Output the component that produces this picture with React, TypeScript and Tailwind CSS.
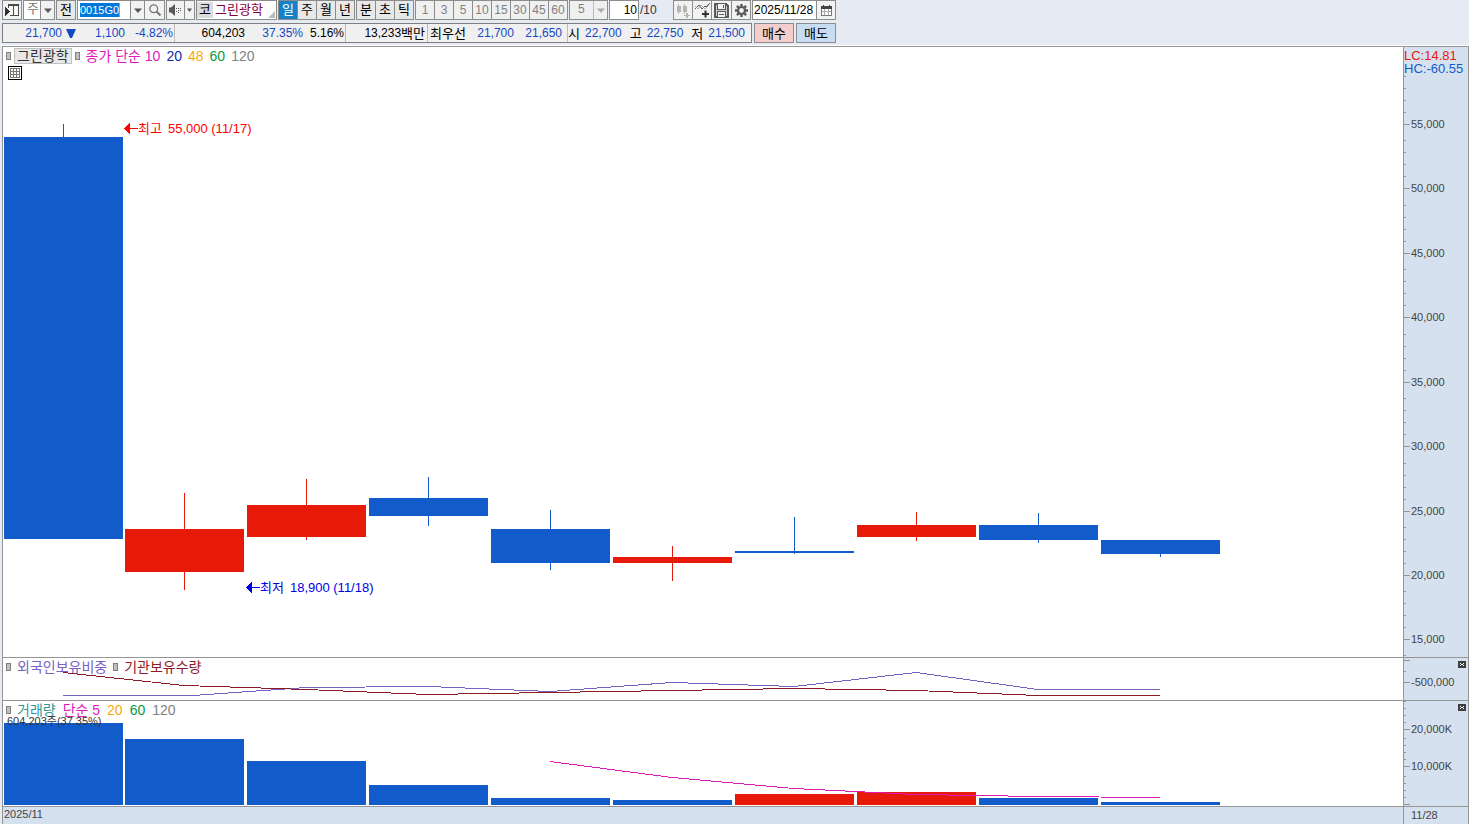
import React from "react";

const BLUE = "#125bcb";
const RED = "#e71908";

type Candle = { x: number; open: number; close: number; high: number; low: number; color: string };

const PLOT_W = 1400;
const PRICE_H = 610;
const RATIO_H = 42;
const VOLUME_H = 105;

const candles: Candle[] = [
  { x: 1, open: 90, close: 492, high: 77, low: 492, color: BLUE },
  { x: 122, open: 482, close: 525, high: 446, low: 543, color: RED },
  { x: 244, open: 458, close: 490, high: 432, low: 493, color: RED },
  { x: 366, open: 451, close: 469, high: 430, low: 479, color: BLUE },
  { x: 488, open: 482, close: 516, high: 463, low: 523, color: BLUE },
  { x: 610, open: 510, close: 516, high: 499, low: 534, color: RED },
  { x: 732, open: 504, close: 506, high: 470, low: 507, color: BLUE },
  { x: 854, open: 478, close: 490, high: 465, low: 494, color: RED },
  { x: 976, open: 478, close: 493, high: 466, low: 496, color: BLUE },
  { x: 1098, open: 493, close: 507, high: 493, low: 510, color: BLUE },
];

const volumes = [
  { x: 1, y: 22, color: BLUE },
  { x: 122, y: 38, color: BLUE },
  { x: 244, y: 60, color: BLUE },
  { x: 366, y: 84, color: BLUE },
  { x: 488, y: 97, color: BLUE },
  { x: 610, y: 99, color: BLUE },
  { x: 732, y: 93, color: RED },
  { x: 854, y: 91, color: RED },
  { x: 976, y: 97, color: BLUE },
  { x: 1098, y: 101, color: BLUE },
];

type Tick = { y: number; label?: string; major?: boolean };

const priceMajors = [
  { y: 77, label: "55,000" },
  { y: 141, label: "50,000" },
  { y: 206, label: "45,000" },
  { y: 270, label: "40,000" },
  { y: 335, label: "35,000" },
  { y: 399, label: "30,000" },
  { y: 464, label: "25,000" },
  { y: 528, label: "20,000" },
  { y: 592, label: "15,000" },
];

const priceTicks: Tick[] = [
  { y: 0 },
  ...priceMajors.flatMap((m) => [
    ...[48, 36, 24, 12].map((d) => ({ y: m.y - d })),
    { y: m.y, label: m.label, major: true },
  ]),
  { y: 608 },
];

const ratioTicks: Tick[] = [
  { y: 2, major: true },
  { y: 13 },
  { y: 24, major: true, label: "-500,000" },
];

const volumeTicks: Tick[] = [
  { y: 0 },
  { y: 7 },
  { y: 14 },
  { y: 21 },
  { y: 28, major: true, label: "20,000K" },
  { y: 37 },
  { y: 44 },
  { y: 51 },
  { y: 58 },
  { y: 65, major: true, label: "10,000K" },
  { y: 75 },
  { y: 82 },
  { y: 89 },
  { y: 96 },
  { y: 103, major: true },
];

function Axis({ ticks, height, children }: { ticks: Tick[]; height: number; children?: React.ReactNode }) {
  return (
    <div className="relative w-[66px] shrink-0 overflow-hidden border-x border-[#959595] bg-[#d6e1ef] text-[11px] leading-none text-[#444]">
      {ticks.map((t) => (
        <div key={t.y} className="absolute left-0 flex h-px items-center" style={{ top: `${(t.y / height) * 100}%` }}>
          <span className={t.major ? "h-px w-1.5 bg-[#999592]" : "h-px w-0.5 bg-[#999592]"} />
          {t.label && <span className="ml-px whitespace-nowrap">{t.label}</span>}
        </div>
      ))}
      {children}
    </div>
  );
}

function CloseBox({ label }: { label: string }) {
  return (
    <button aria-label={label} className="absolute top-[3px] right-0.5 flex h-[7px] w-2 items-center justify-center bg-[#3f3f3f]">
      <svg width="4" height="3" viewBox="0 0 4 3" shapeRendering="crispEdges" fill="#fff">
        <path d="M0 0h1v1H0zM3 0h1v1H3zM1 1h2v1H1zM0 2h1v1H0zM3 2h1v1H3z" />
      </svg>
    </button>
  );
}

function Marker() {
  return <span className="h-[8px] w-[5px] shrink-0 border border-[#808080] bg-[#c0c0c0]" />;
}

function Plot({ height, children }: { height: number; children: React.ReactNode }) {
  return (
    <svg
      className="absolute inset-0 h-full w-full"
      viewBox={`0 0 ${PLOT_W} ${height}`}
      preserveAspectRatio="none"
      shapeRendering="crispEdges"
      aria-hidden="true"
    >
      {children}
    </svg>
  );
}

function Note({ x, y, color, label, value }: { x: number; y: number; color: string; label: string; value: string }) {
  return (
    <div
      className="absolute flex h-4 -translate-y-1/2 items-center text-[13px] leading-none whitespace-nowrap"
      style={{ left: `${(x / PLOT_W) * 100}%`, top: `${(y / PRICE_H) * 100}%`, color }}
    >
      <svg width="14" height="11" viewBox="0 0 14 11" fill="currentColor" shapeRendering="crispEdges">
        <path d="M0 5.5 6 0v11zM6 5h8v1H6z" />
      </svg>
      <span className="mr-1.5">{label}</span>
      <span>{value}</span>
    </div>
  );
}

function Segments({ items, active, muted }: { items: string[]; active?: string; muted?: boolean }) {
  return (
    <div className="flex h-5 gap-px border border-[#8c8c8c] bg-[#8c8c8c]">
      {items.map((it) => (
        <button
          key={it}
          className={
            it === active
              ? "flex w-[18px] items-center justify-center bg-[#1682c5] text-[13px] text-white"
              : muted
                ? "flex w-[18px] items-center justify-center bg-[#f0f0f0] text-[12px] text-[#808080]"
                : "flex w-[18px] items-center justify-center bg-[#e8e8e8] text-[13px] text-black"
          }
        >
          {it}
        </button>
      ))}
    </div>
  );
}

function Caret({ color }: { color: string }) {
  return (
    <svg width="8" height="5" viewBox="0 0 8 5" fill={color}>
      <path d="M0 .5h8L4 5z" />
    </svg>
  );
}

function IconButton({ label, className, children }: { label: string; className: string; children: React.ReactNode }) {
  return (
    <button aria-label={label} className={`flex h-5 items-center justify-center border border-[#8c8c8c] bg-[#f2f2f2] ${className}`}>
      {children}
    </button>
  );
}

function Toolbar() {
  return (
    <div className="flex h-5 items-center pl-0.5">
      <IconButton label="창 목록" className="w-5">
        <svg width="14" height="14" viewBox="0 0 14 14" shapeRendering="crispEdges">
          <path d="M3.500 5V1.500h10v11H5" fill="#f8f8f8" stroke="#4a4a4a" />
          <path d="M3 1h11v2H3zM8 3h1v10H8z" fill="#4a4a4a" />
          <path d="M0 4v9l5-4.500z" fill="#333" />
        </svg>
      </IconButton>
      <div className="relative ml-px flex h-5 w-8 border border-[#8c8c8c] bg-white">
        <select aria-label="주기" className="h-[18px] w-full appearance-none pb-0.5 pl-[3px] text-[13px] leading-4 text-[#777] outline-none">
          <option>주</option>
        </select>
        <span className="pointer-events-none absolute inset-y-0 right-0 flex w-3.5 items-center justify-center border-l border-[#8c8c8c] bg-[#f2f2f2]">
          <Caret color="#555" />
        </span>
      </div>
      <button className="ml-px flex h-5 w-5 items-center justify-center border border-[#8c8c8c] bg-[#e8e8e8] text-[13px]">전</button>
      <div className="ml-px flex h-5 w-[68px] border border-[#8c8c8c] bg-white">
        <div className="flex flex-1 items-center pl-0.5">
          <input
            aria-label="종목코드"
            defaultValue="0015G0"
            className="h-3.5 w-[40px] border-r border-[#ff8c1a] bg-[#0078d7] text-[11px] text-white outline-none"
          />
        </div>
        <button aria-label="종목코드 목록" className="flex w-3.5 items-center justify-center border-l border-[#8c8c8c] bg-[#f2f2f2]">
          <Caret color="#555" />
        </button>
      </div>
      <IconButton label="검색" className="-ml-px w-[21px]">
        <svg width="12" height="12" viewBox="0 0 12 12" fill="none" stroke="#777">
          <circle cx="4.700" cy="4.700" r="3.900" strokeWidth="1.300" />
          <path d="M7.500 7.500l4 4" strokeWidth="2" />
        </svg>
      </IconButton>
      <IconButton label="음성" className="ml-px w-[19px]">
        <svg width="13" height="12" viewBox="0 0 13 12" fill="#5a5a5a">
          <path d="M0 3.500h2L6 0v12L2 8.500H0z" />
          <path d="M7 4h1v1H7zM7 7h1v1H7zM9 4h1v1H9zM9 6h1v1H9zM9 8h1v1H9zM11 4h1v1h-1zM11 6h1v1h-1z" shapeRendering="crispEdges" />
        </svg>
      </IconButton>
      <IconButton label="음성 설정" className="-ml-px w-[11px]">
        <svg width="5" height="4" viewBox="0 0 5 4" fill="#555">
          <path d="M0 .5h5L2.500 4z" />
        </svg>
      </IconButton>
      <div className="relative ml-px flex h-5 w-[81px] items-center border border-[#8c8c8c] bg-white text-[13px]">
        <span className="flex h-4 w-4 items-center justify-center bg-[#dcdcdc] text-black">코</span>
        <span className="ml-0.5 text-[#800040]">그린광학</span>
        <svg className="absolute right-px bottom-px" width="7" height="7" viewBox="0 0 7 7" fill="#bbb">
          <path d="M7 0v7H0z" />
        </svg>
      </div>
      <div className="ml-px flex gap-px">
        <Segments items={["일", "주", "월", "년"]} active="일" />
        <Segments items={["분", "초", "틱"]} />
        <Segments items={["1", "3", "5", "10", "15", "30", "45", "60"]} muted />
      </div>
      <div className="relative ml-px flex h-5 w-[39px] border border-[#8c8c8c] bg-[#f0f0f0]">
        <select aria-label="분 단위" className="h-[18px] w-full appearance-none pb-0.5 pl-2 text-[12px] leading-4 text-[#808080] outline-none">
          <option>5</option>
        </select>
        <span className="pointer-events-none absolute inset-y-0 right-0 flex w-3.5 items-center justify-center border-l border-[#bbb] bg-[#f0f0f0]">
          <Caret color="#aaa" />
        </span>
      </div>
      <label className="ml-px flex items-center text-[12px] text-[#333]">
        <input
          aria-label="조회 개수"
          defaultValue="10"
          className="h-5 w-[30px] border border-[#8c8c8c] bg-white pr-px text-right text-black outline-none"
        />
        <span className="ml-px w-[33px]">/10</span>
      </label>
      <div className="flex">
        <IconButton label="캔들 추가" className="w-5">
          <svg width="15" height="15" viewBox="0 0 15 15" fill="#b4b4b4" shapeRendering="crispEdges">
            <path d="M1 3h4v6H1zM2 1h1v10H2zM7 3h4v6H7zM8 1h1v10H8zM8 12h6v1H8zM10 10h2v5h-2z" />
          </svg>
        </IconButton>
        <IconButton label="지표 추가" className="-ml-px w-5">
          <svg width="15" height="15" viewBox="0 0 15 15" fill="none">
            <path d="M0 6l4-4 3 4 3-3 1 1 4-4" stroke="#555" />
            <path d="M0 3l3 3 3-4 4 4 4-4" stroke="#999" strokeWidth=".8" />
            <path d="M7 11h7M10.500 7.500v7" stroke="#333" strokeWidth="2" />
          </svg>
        </IconButton>
        <IconButton label="저장" className="-ml-px w-[21px]">
          <svg width="15" height="15" viewBox="0 0 15 15" fill="none" stroke="#5a5a5a" shapeRendering="crispEdges">
            <path d="M1 1h11l2 2v11H1z" fill="#ccc" strokeWidth="1.500" />
            <path d="M3.500 1v5h8V1M3.500 14V8.500h8V14" fill="#f2f2f2" />
            <path d="M9.500 2v3M5 11.500h5" />
          </svg>
        </IconButton>
        <IconButton label="설정" className="-ml-px w-5">
          <svg width="13" height="13" viewBox="0 0 13 13" fill="none" stroke="#5a5a5a">
            <circle cx="6.500" cy="6.500" r="3.500" strokeWidth="2.200" />
            <path d="M6.500 0v2.500M6.500 10.500V13M0 6.500h2.500M10.500 6.500H13M1.900 1.900l1.700 1.700M9.400 9.400l1.700 1.700M1.900 11.100l1.700-1.700M9.400 3.600l1.700-1.700" strokeWidth="2.400" />
          </svg>
        </IconButton>
      </div>
      <div className="ml-px flex">
        <input
          aria-label="조회 일자"
          defaultValue="2025/11/28"
          className="h-5 w-[65px] border border-[#8c8c8c] bg-white pl-px text-[12px] outline-none"
        />
        <IconButton label="달력" className="-ml-px w-5">
          <svg width="11" height="11" viewBox="0 0 11 11" shapeRendering="crispEdges">
            <path d="M0 1h11v10H0z" fill="#777" />
            <path d="M1 4h9v6H1z" fill="#fff" />
            <path d="M2 0h1v2H2zM8 0h1v2H8zM0 1h11v3H0z" fill="#444" />
            <path d="M1 6h9v1H1zM3 4h1v6H3zM7 4h1v6H7z" fill="#aaa" />
          </svg>
        </IconButton>
      </div>
    </div>
  );
}

function QuoteBar() {
  return (
    <div className="mt-[3px] flex h-5 pl-0.5">
      <div className="flex h-5 w-[750px] border border-[#808080] bg-[#f0f0f0] text-[12px] leading-none whitespace-nowrap text-[#1449c4]">
        <div className="flex w-[172px] items-center justify-end border-r border-[#bbb] pr-px">
          <span>21,700</span>
          <svg className="ml-1" width="10" height="10" viewBox="0 0 10 10" fill="#1449c4">
            <path d="M0 1h10L6 10H4z" />
          </svg>
          <span className="w-[49px] text-right">1,100</span>
          <span className="w-12 text-right">-4.82%</span>
        </div>
        <div className="flex w-[171px] items-center justify-end border-r border-[#bbb] pr-px">
          <span className="text-black">604,203</span>
          <span className="w-[58px] text-right">37.35%</span>
          <span className="w-[41px] text-right text-black">5.16%</span>
        </div>
        <div className="flex w-[82px] items-center justify-end border-r border-[#bbb] pr-0.5 text-black">
          13,233<span className="text-[13px]">백만</span>
        </div>
        <div className="flex w-[140px] items-center justify-between border-r border-[#bbb] pr-[5px] pl-0.5">
          <span className="text-[13px] text-black">최우선</span>
          <span>21,700</span>
          <span>21,650</span>
        </div>
        <div className="flex flex-1 items-center justify-between pr-1.5">
          {[
            ["시", "22,700"],
            ["고", "22,750"],
            ["저", "21,500"],
          ].map(([k, v]) => (
            <span key={k} className="flex items-center gap-[5px]">
              <span className="text-[13px] text-black">{k}</span>
              <span>{v}</span>
            </span>
          ))}
        </div>
      </div>
      <button className="ml-0.5 h-5 w-10 border border-[#8c8c8c] bg-[#f4ceca] text-[13px] leading-none">매수</button>
      <button className="ml-0.5 h-5 w-10 border border-[#8c8c8c] bg-[#c8dcf2] text-[13px] leading-none">매도</button>
    </div>
  );
}

export default function App() {
  return (
    <div className="flex min-h-screen flex-col bg-[#e6ebf3] font-['Liberation_Sans','Noto_Sans_CJK_KR',sans-serif] text-black">
      <header className="border-b border-white pb-0.5">
        <Toolbar />
        <QuoteBar />
      </header>

      <main className="ml-0.5 flex flex-1 flex-col border-t border-l border-[#959595] bg-white">
        <section className="flex min-h-80 flex-1 border-b border-[#959595]">
          <div className="relative min-w-0 flex-1 overflow-hidden">
            <Plot height={PRICE_H}>
              {candles.map((c) => (
                <g key={c.x} fill={c.color}>
                  <rect x={c.x + 59} y={c.high} width="1" height={c.low - c.high} />
                  <rect x={c.x} y={c.open} width="119" height={c.close - c.open} />
                </g>
              ))}
            </Plot>
            <div className="relative flex items-center pt-px pl-[3px] text-[14px] leading-none">
              <Marker />
              <span className="mr-[3px] ml-[3px] flex h-4 items-center border border-[#c0c0c0] bg-[#e8e8e8] px-0.5 text-[#333]">그린광학</span>
              <Marker />
              <span className="ml-1.5 flex gap-1.5">
                <span className="text-[#e01bb5]">종가 단순 10</span>
                <span className="text-[#1429a8]">20</span>
                <span className="text-[#f5ab0c]">48</span>
                <span className="text-[#0a9a3c]">60</span>
                <span className="text-[#808080]">120</span>
              </span>
            </div>
            <button aria-label="데이터 표" className="relative mt-0.5 ml-[5px] flex h-3.5 w-3.5 items-center justify-center border border-black bg-white">
              <svg width="10" height="10" viewBox="0 0 10 10" fill="none" stroke="#777" shapeRendering="crispEdges">
                <path d="M.5.5h9v9h-9zM0 3.500h10M0 6.500h10M3.500 0v10M6.500 0v10" />
              </svg>
            </button>
            <Note x={121} y={81} color="#ff0000" label="최고" value="55,000 (11/17)" />
            <Note x={243} y={540} color="#0000e6" label="최저" value="18,900 (11/18)" />
          </div>
          <Axis ticks={priceTicks} height={PRICE_H}>
            <div className="relative bg-[#d6e1ef] pt-0.5 text-[13px] leading-[13px] whitespace-nowrap">
              <div className="text-[#e71908]">LC:14.81</div>
              <div className="text-[#125bcb]">HC:-60.55</div>
            </div>
          </Axis>
        </section>

        <section className="flex h-[43px] border-b border-[#959595]">
          <div className="relative min-w-0 flex-1 overflow-hidden">
            <div className="flex items-center pt-0.5 pl-[3px] text-[14px] leading-none">
              <Marker />
              <span className="mr-1.5 ml-1.5 text-[#7762c4]">외국인보유비중</span>
              <Marker />
              <span className="ml-1.5 text-[#8a1c28]">기관보유수량</span>
            </div>
            <Plot height={RATIO_H}>
              <g fill="none" strokeWidth="1">
                <polyline
                  stroke="#7762c4"
                  points="60,37.5 181,37.5 190,37.5 303,29.5 425,28.5 547,33.5 669,24.5 791,28.5 913,14.5 1035,31.5 1157,31.5"
                />
                <polyline
                  stroke="#8a1c28"
                  points="60,14.5 181,27.5 303,31.5 425,36.5 547,34.5 669,32.5 791,30.5 913,32.5 1035,37.5 1157,37.5"
                />
              </g>
            </Plot>
          </div>
          <Axis ticks={ratioTicks} height={RATIO_H}>
            <CloseBox label="보유비중 닫기" />
          </Axis>
        </section>

        <section className="flex h-[106px] border-b border-[#959595]">
          <div className="relative min-w-0 flex-1 overflow-hidden">
            <Plot height={VOLUME_H}>
              {volumes.map((v) => (
                <rect key={v.x} x={v.x} y={v.y} width="119" height={104 - v.y} fill={v.color} />
              ))}
              <polyline
                fill="none"
                stroke="#e01bb5"
                points="547,60.5 669,76.5 791,87.5 913,93.5 1035,95.5 1157,96.5"
              />
            </Plot>
            <div className="relative flex items-center pt-0.5 pl-[3px] text-[14px] leading-none">
              <Marker />
              <span className="ml-1.5 flex gap-[7px]">
                <span className="text-[#329a98]">거래량</span>
                <span className="text-[#e01bb5]">단순 5</span>
                <span className="text-[#f5ab0c]">20</span>
                <span className="text-[#0a9a3c]">60</span>
                <span className="text-[#808080]">120</span>
              </span>
            </div>
            <div className="relative pl-1 text-[11px] leading-[9px] text-[#333]">604,203주(37.35%)</div>
          </div>
          <Axis ticks={volumeTicks} height={VOLUME_H}>
            <CloseBox label="거래량 닫기" />
          </Axis>
        </section>

        <footer className="flex h-[17px] bg-[#d6e1ef] text-[11px] leading-none text-[#444]">
          <div className="flex-1 pt-0.5 pl-px">2025/11</div>
          <div className="w-[66px] border-x border-[#959595] pt-[3px] pl-[7px]">11/28</div>
        </footer>
      </main>
    </div>
  );
}
